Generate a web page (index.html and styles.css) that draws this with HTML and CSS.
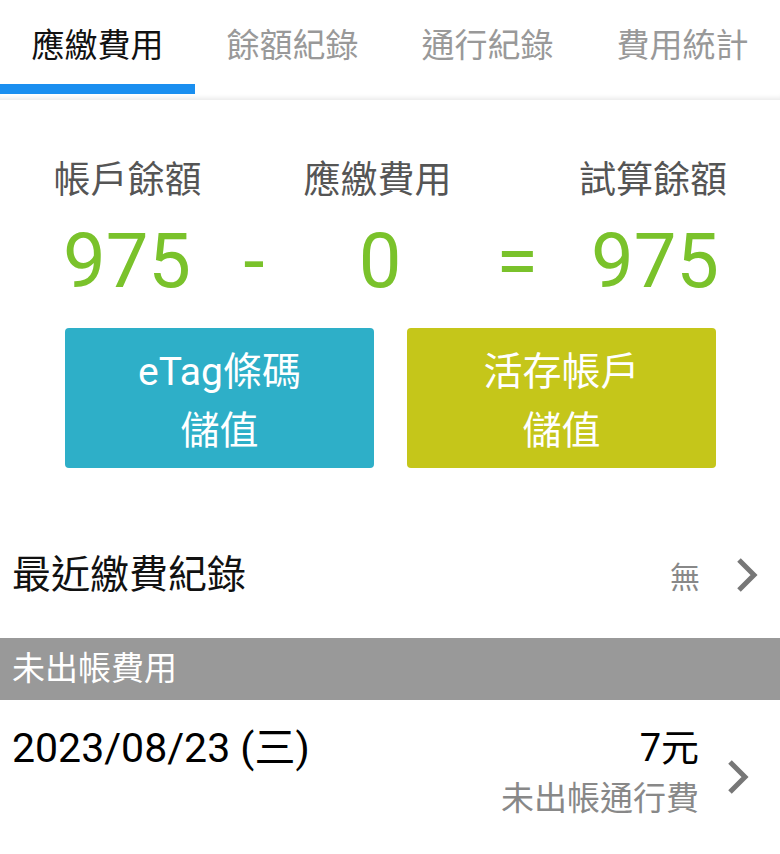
FILE: index.html
```html
<!DOCTYPE html>
<html lang="zh-Hant">
<head>
<meta charset="utf-8">
<link rel="stylesheet" href="styles.css">
</head>
<body>
<div class="tabs">
  <div class="tab active">應繳費用</div>
  <div class="tab">餘額紀錄</div>
  <div class="tab">通行紀錄</div>
  <div class="tab">費用統計</div>
</div>
<div class="summary">
  <div class="labels">
    <div class="lbl l1">帳戶餘額</div>
    <div class="lbl l2">應繳費用</div>
    <div class="lbl l3">試算餘額</div>
  </div>
  <div class="nums">
    <div class="n n1">975</div>
    <div class="n op1">-</div>
    <div class="n n2">0</div>
    <div class="n op2">=</div>
    <div class="n n3">975</div>
  </div>
  <div class="buttons">
    <div class="btn cyan">eTag條碼<br>儲值</div>
    <div class="btn olive">活存帳戶<br>儲值</div>
  </div>
</div>
<div class="recent">
  <div class="recent-title">最近繳費紀錄</div>
  <div class="recent-right">
    <span class="none">無</span>
    <svg class="chev" width="22" height="34" viewBox="0 0 22 34"><path d="M3 2 L18 17 L3 32" fill="none" stroke="#777" stroke-width="5"/></svg>
  </div>
</div>
<div class="section">未出帳費用</div>
<div class="row">
  <div class="date">2023/08/23 (三)</div>
  <div class="row-right">
    <div class="amts">
      <div class="amt">7元</div>
      <div class="desc">未出帳通行費</div>
    </div>
    <svg class="chev2" width="22" height="34" viewBox="0 0 22 34"><path d="M3 2 L18 17 L3 32" fill="none" stroke="#777" stroke-width="5"/></svg>
  </div>
</div>
</body>
</html>
```
FILE: styles.css
```css
* { box-sizing: border-box; }
html, body { margin: 0; padding: 0; background: #fff; }
body {
  width: 780px;
  height: 854px;
  overflow: hidden;
  font-family: Roboto, "Noto Sans CJK TC", sans-serif;
  color: #000;
}
.tabs {
  display: flex;
  height: 100px;
  background: #fff;
  box-shadow: inset 0 -6px 5px -4px #e9e9e9;
}
.tab {
  flex: 1;
  text-align: center;
  font-size: 33px;
  color: #999;
  padding-top: 24px;
  height: 94px;
  line-height: 44px;
}
.tab.active {
  color: #111;
  border-bottom: 10px solid #1a8ff0;
}
.summary { padding-top: 59px; }
.labels {
  display: flex;
  font-size: 37px;
  color: #555;
  line-height: 44px;
}
.lbl { text-align: center; white-space: nowrap; flex-shrink: 0; }
.l1 { width: 255px; }
.l2 { width: 245px; }
.l3 { width: 306px; }
.nums {
  display: flex;
  color: #7ac22b;
  font-size: 76px;
  line-height: 80px;
  margin-top: 18px;
}
.n { display: flex; justify-content: center; white-space: nowrap; flex-shrink: 0; }
.n1 { width: 254px; }
.op1 { width: 0; }
.n2 { width: 252px; }
.op2 { width: 22px; }
.n3 { width: 254px; }
.buttons {
  display: flex;
  gap: 33px;
  padding-left: 65px;
  margin-top: 27px;
}
.btn {
  width: 309px;
  height: 140px;
  border-radius: 4px;
  color: #fff;
  font-size: 39px;
  line-height: 59px;
  text-align: center;
  padding-top: 15px;
}
.cyan { background: #2eafc8; }
.olive { background: #c5c61a; }
.recent {
  display: flex;
  justify-content: space-between;
  align-items: center;
  height: 170px;
  padding: 44px 22px 0 12px;
}
.recent-title { font-size: 39px; color: #111; line-height: 50px; }
.recent-right { display: flex; align-items: center; gap: 36px; }
.none { font-size: 30px; color: #888; }
.section {
  background: #999;
  color: #fff;
  height: 62px;
  line-height: 62px;
  font-size: 33px;
  padding-left: 12px;
}
.row {
  display: flex;
  justify-content: space-between;
  padding: 23px 31px 0 12px;
}
.date { font-size: 41px; line-height: 50px; }
.row-right { display: flex; align-items: center; gap: 28px; padding-top: 6px; }
.amts { text-align: right; margin-top: -6px; }
.amt { font-size: 38px; line-height: 50px; }
.desc { font-size: 33px; line-height: 52px; color: #888; }
```
